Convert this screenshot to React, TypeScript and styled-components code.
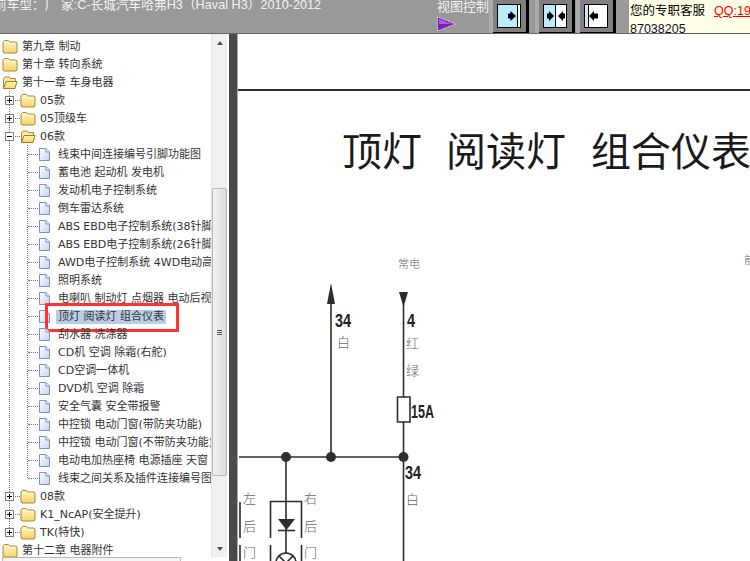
// App.tsx
import React from 'react';
import styled, { createGlobalStyle } from 'styled-components';

type TreeItem = {
  label: string;
  level: 0 | 1 | 2;
  open?: boolean;
  selected?: boolean;
  last?: boolean;
};

const items: TreeItem[] = [
  { label: '第九章 制动', level: 0 },
  { label: '第十章 转向系统', level: 0 },
  { label: '第十一章 车身电器', level: 0, open: true },
  { label: '05款', level: 1 },
  { label: '05顶级车', level: 1 },
  { label: '06款', level: 1, open: true },
  { label: '线束中间连接编号引脚功能图', level: 2 },
  { label: '蓄电池 起动机 发电机', level: 2 },
  { label: '发动机电子控制系统', level: 2 },
  { label: '倒车雷达系统', level: 2 },
  { label: 'ABS EBD电子控制系统(38针脚)', level: 2 },
  { label: 'ABS EBD电子控制系统(26针脚)', level: 2 },
  { label: 'AWD电子控制系统 4WD电动高低', level: 2 },
  { label: '照明系统', level: 2 },
  { label: '电喇叭 制动灯 点烟器 电动后视镜', level: 2 },
  { label: '顶灯 阅读灯 组合仪表', level: 2, selected: true },
  { label: '刮水器 洗涤器', level: 2 },
  { label: 'CD机 空调 除霜(右舵)', level: 2 },
  { label: 'CD空调一体机', level: 2 },
  { label: 'DVD机 空调 除霜', level: 2 },
  { label: '安全气囊 安全带报警', level: 2 },
  { label: '中控锁 电动门窗(带防夹功能)', level: 2 },
  { label: '中控锁 电动门窗(不带防夹功能)', level: 2 },
  { label: '电动电加热座椅 电源插座 天窗', level: 2 },
  { label: '线束之间关系及插件连接编号图', level: 2, last: true },
  { label: '08款', level: 1 },
  { label: 'K1_NcAP(安全提升)', level: 1 },
  { label: 'TK(特快)', level: 1, last: true },
  { label: '第十二章 电器附件', level: 0 },
];

const GlobalStyle = createGlobalStyle`
  html, body {
    margin: 0;
    padding: 0;
    height: 100%;
    overflow: hidden;
    background: #fff;
  }
  #root {
    height: 100%;
  }
`;

const Page = styled.div`
  width: 750px;
  height: 561px;
  display: flex;
  flex-direction: column;
  overflow: hidden;
  font-family: 'Liberation Sans', 'Noto Sans CJK SC', sans-serif;
`;

const Header = styled.header`
  height: 33px;
  flex: none;
  display: flex;
  background: #999;
  border-bottom: 1px solid #666;
  overflow: hidden;
`;

const CarTitle = styled.div`
  width: 437px;
  flex: none;
  margin: -4px 0 0 -6px;
  font-size: 12.7px;
  line-height: 18px;
  color: #f2f2f2;
  white-space: nowrap;
`;

const ViewControl = styled.div`
  width: 52px;
  flex: none;
  margin-left: 6px;
  display: flex;
  flex-direction: column;
  font-size: 13px;
  line-height: 14px;
  color: #f2f2f2;
  white-space: nowrap;
`;

const ToolSlot = styled.div<{ $gap: number }>`
  flex: none;
  display: flex;
  margin-left: ${({ $gap }) => $gap}px;
  border-left: 4px solid #aaa;
`;

const ToolFace = styled.button<{ $width: number }>`
  width: ${({ $width }) => $width}px;
  height: 33px;
  margin: 0;
  padding: 0 0 0 4px;
  display: flex;
  align-items: center;
  background: #808080;
  border: none;
  border-right: 3px solid #000;
  border-bottom: 1px solid #000;
  box-sizing: border-box;
`;

const Service = styled.div`
  flex: none;
  width: 121px;
  margin-left: 13px;
  padding-left: 1px;
  background: #ffffe8;
  font-size: 12.5px;
  line-height: 17px;
  color: #000;
  overflow: hidden;
  white-space: nowrap;
`;

const ServiceLine = styled.div`
  margin-top: 3px;
  height: 18px;
`;

const Phone = styled.div`
  color: #101040;
`;

const QQ = styled.a`
  margin-left: 9px;
  color: #f00;
  text-decoration: underline;
`;

const Main = styled.main`
  flex: 1;
  min-height: 0;
  display: flex;
`;

const Sidebar = styled.aside`
  width: 229px;
  flex: none;
  display: grid;
  grid-template-columns: 211px 16px;
  grid-template-rows: 523px 4px;
  background: #fff;
`;

const Tree = styled.ul`
  list-style: none;
  margin: 0;
  padding: 3px 0 0;
  overflow: hidden;
`;

const Row = styled.li`
  position: relative;
  height: 18px;
  display: flex;
  align-items: center;
  white-space: nowrap;
`;

const Guide = styled.span<{ $width: number; $line: 'none' | 'full' | 'half'; $branch?: boolean }>`
  width: ${({ $width }) => $width}px;
  height: 18px;
  flex: none;
  position: relative;
  background-image: ${({ $line }) =>
    $line === 'none'
      ? 'none'
      : 'repeating-linear-gradient(to bottom, #777 0 1px, transparent 1px 2px)'};
  background-repeat: no-repeat;
  background-position: 9px 0;
  background-size: 1px ${({ $line }) => ($line === 'half' ? '9px' : '18px')};

  &::after {
    content: '';
    display: ${({ $branch }) => ($branch ? 'block' : 'none')};
    position: absolute;
    left: 10px;
    right: 0;
    top: 9px;
    border-top: 1px dotted #777;
  }
`;

const Expander = styled.span`
  position: absolute;
  left: 5px;
  top: 5px;
  width: 7px;
  height: 7px;
  background: #fff;
  border: 1px solid #808080;
  display: flex;
  z-index: 1;
`;

const RowLabel = styled.span<{ $selected?: boolean; $level: number }>`
  margin-left: ${({ $level, $selected }) =>
    $level === 2 ? ($selected ? 5 : 7) : 4}px;
  margin-top: 2px;
  padding: 0 ${({ $selected }) => ($selected ? '2px' : '0')};
  font-family: 'DejaVu Sans', 'Noto Sans CJK SC', sans-serif;
  font-size: 11px;
  line-height: 14px;
  color: #333;
  background: ${({ $selected }) => ($selected ? '#b9cde8' : 'transparent')};
`;

const RootIndent = styled.span`
  width: 2px;
  flex: none;
`;

const RedMark = styled.span`
  position: absolute;
  left: 45px;
  top: -4px;
  width: 134px;
  height: 29px;
  box-sizing: border-box;
  border: 3px solid #f33;
  pointer-events: none;
`;

const ScrollTrack = styled.div`
  display: flex;
  flex-direction: column;
  align-items: stretch;
  background: #f0f0f0;
  border-left: 1px solid #e4e4e4;
  box-sizing: border-box;
`;

const ScrollArrow = styled.div<{ $dir: 'up' | 'down' }>`
  height: 17px;
  flex: none;
  display: flex;
  justify-content: center;
  align-items: center;
  margin-top: ${({ $dir }) => ($dir === 'down' ? 'auto' : '0')};

  &::before {
    content: '';
    border-left: 3.5px solid transparent;
    border-right: 3.5px solid transparent;
    border-bottom: ${({ $dir }) => ($dir === 'up' ? '4px solid #505050' : 'none')};
    border-top: ${({ $dir }) => ($dir === 'down' ? '4px solid #505050' : 'none')};
  }
`;

const ScrollThumb = styled.div`
  height: 288px;
  margin-top: 137px;
  flex: none;
  display: flex;
  flex-direction: column;
  justify-content: center;
  gap: 1px;
  padding: 0 4px;
  box-sizing: border-box;
  background: linear-gradient(to right, #f2f2f2, #dcdcdc);
  border: 1px solid #b8b8b8;
  border-radius: 2px;
`;

const Grip = styled.span`
  height: 1px;
  background: #555;
`;

const HScroll = styled.div`
  margin-left: 2px;
  width: 179px;
  height: 6px;
  border: 1px solid #b8b8b8;
  border-bottom: none;
  background: #f4f4f4;
  box-sizing: border-box;
`;

const Splitter = styled.div`
  width: 9px;
  flex: none;
  background: #4a4a4a;
  border-right: 1px solid #aaa;
  box-sizing: border-box;
`;

const Canvas = styled.section`
  flex: 1;
  min-width: 0;
  background: #fff;
  overflow: hidden;
`;

const DiagramSvg = styled.svg`
  display: block;
  width: 512px;
  height: 527px;
  font-family: 'Noto Sans CJK SC', 'Liberation Sans', sans-serif;
`;

const DiagramTitle = styled.text`
  font-size: 40px;
  fill: #1a1a1a;
`;

const WireLabel = styled.text<{ $small?: boolean }>`
  font-size: ${({ $small }) => ($small ? 11 : 13)}px;
  fill: #666;
  font-weight: 300;
`;

const WireNumber = styled.text`
  font-family: 'Liberation Sans', sans-serif;
  font-size: 18px;
  font-weight: 700;
  fill: #222;
`;

const Wire = styled.path`
  fill: none;
  stroke: #2c2c2c;
  stroke-width: 1.6;
`;

const Node = styled.circle`
  fill: #2f2f2f;
`;

const Solid = styled.path`
  fill: #2c2c2c;
`;

const FolderIcon = ({ open }: { open?: boolean }) => (
  <svg width="16" height="15" viewBox="0 0 16 15" style={{ flex: 'none' }}>
    <defs>
      <linearGradient id="fold" x1="0" y1="0" x2="0" y2="1">
        <stop offset="0" stopColor="#fff6c4" />
        <stop offset="1" stopColor="#f8d468" />
      </linearGradient>
    </defs>
    {open ? (
      <>
        <path d="M1.5 12.5V3.5L3 2h4l1 1.5h5.500v3" fill="#fbe9a0" stroke="#a88a3a" />
        <path d="M1.500 13.500 L4 6.500H15L13 13.500Z" fill="url(#fold)" stroke="#a07c28" />
      </>
    ) : (
      <>
        <path d="M1 4V3L2.500 1.500H6.500L8 3H14L15 4V13L14 14H2L1 13Z" fill="url(#fold)" stroke="#a88a3a" />
        <path d="M2 4.500H14" stroke="#fff8d8" />
      </>
    )}
  </svg>
);

const LeafIcon = () => (
  <svg width="13" height="15" viewBox="0 0 13 15" style={{ flex: 'none' }}>
    <defs>
      <linearGradient id="leaf" x1="0" y1="0" x2="1" y2="1">
        <stop offset="0" stopColor="#ffffff" />
        <stop offset="1" stopColor="#c4d2f2" />
      </linearGradient>
    </defs>
    <path d="M1.500 1.500H8L11.500 5V13.500H1.500Z" fill="url(#leaf)" stroke="#7d8ec4" />
    <path d="M8 1.500V5H11.500" fill="#eef2fc" stroke="#7d8ec4" />
  </svg>
);

const PurpleArrow = () => (
  <svg width="20" height="16" viewBox="0 0 20 16" style={{ marginTop: 2 }}>
    <path d="M0.500 1V15L18.500 8Z" fill="#7a1fb8" stroke="#e8d8f4" strokeDasharray="1.500 1" />
    <path d="M2 3V8H14Z" fill="#b060e0" />
  </svg>
);

const SplitIcon = ({ split, arrows }: { split: number; arrows: string }) => (
  <svg width="24" height="24" viewBox="0 0 24 24">
    <rect x="0.500" y="0.500" width="23" height="23" fill="#fff" stroke="#000" />
    <rect x="1" y="1" width={split - 1} height="22" fill="#bdeaff" />
    <path d={`M${split + 0.5} 1V23`} stroke="#000" />
    <path d={arrows} fill="#000" />
  </svg>
);

const Diagram = () => (
  <DiagramSvg viewBox="238 34 512 527">
    <Wire d="M238 90H750" style={{ strokeWidth: 2 }} />
    <DiagramTitle x="342" y="166">顶灯</DiagramTitle>
    <DiagramTitle x="446" y="166">阅读灯</DiagramTitle>
    <DiagramTitle x="591" y="166">组合仪表</DiagramTitle>

    <WireLabel $small x="398" y="268">常电</WireLabel>
    <WireLabel $small x="744" y="264">前</WireLabel>

    <Solid d="M331 283L327 304H335Z" />
    <Solid d="M399 292H408L403.500 307Z" />
    <Wire d="M331 304V457M403.500 304V397M403.500 422V561M239 457H403.500M286 457V561" />
    <Wire d="M397.500 397H410V422H397.500Z" />
    <Wire d="M270.500 538V501.500H301.500V538M270.500 545V561M301.500 545V561M240 502V538M240 545V561" />
    <Solid d="M278 519H295L286.500 530Z" />
    <Wire d="M278 530.500H295" />
    <circle cx="286" cy="563" r="10" fill="#fff" stroke="#2c2c2c" strokeWidth="1.600" />
    <Wire d="M279 556L293 570M293 556L279 570" />
    <Node cx="286" cy="457" r="5" />
    <Node cx="331" cy="457" r="5" />
    <Node cx="403.500" cy="457" r="5" />

    <WireNumber x="335" y="327" textLength={16} lengthAdjust="spacingAndGlyphs">34</WireNumber>
    <WireLabel x="337" y="347">白</WireLabel>
    <WireNumber x="407" y="327" textLength={8} lengthAdjust="spacingAndGlyphs">4</WireNumber>
    <WireLabel x="406" y="348">红</WireLabel>
    <WireLabel x="406" y="375">绿</WireLabel>
    <WireNumber x="411" y="418" textLength={23} lengthAdjust="spacingAndGlyphs">15A</WireNumber>
    <WireNumber x="405" y="479" textLength={16} lengthAdjust="spacingAndGlyphs">34</WireNumber>
    <WireLabel x="406" y="504">白</WireLabel>

    <WireLabel x="243" y="503">左</WireLabel>
    <WireLabel x="243" y="531">后</WireLabel>
    <WireLabel x="243" y="557">门</WireLabel>
    <WireLabel x="304" y="503">右</WireLabel>
    <WireLabel x="304" y="531">后</WireLabel>
    <WireLabel x="304" y="557">门</WireLabel>
  </DiagramSvg>
);

const TreeRow = ({ item }: { item: TreeItem }) => {
  if (item.level === 0) {
    return (
      <Row>
        <RootIndent />
        <FolderIcon open={item.open} />
        <RowLabel $level={0}>{item.label}</RowLabel>
      </Row>
    );
  }
  if (item.level === 1) {
    return (
      <Row>
        <Guide $width={20} $line={item.last ? 'half' : 'full'} $branch>
          <Expander>
            <svg width="7" height="7" viewBox="0 0 7 7">
              <path d={item.open ? 'M1 3.500H6' : 'M1 3.500H6M3.500 1V6'} stroke="#000" />
            </svg>
          </Expander>
        </Guide>
        <FolderIcon open={item.open} />
        <RowLabel $level={1}>{item.label}</RowLabel>
      </Row>
    );
  }
  return (
    <Row>
      <Guide $width={18} $line="full" />
      <Guide $width={20} $line={item.last ? 'half' : 'full'} $branch />
      <LeafIcon />
      <RowLabel $level={2} $selected={item.selected}>{item.label}</RowLabel>
      {item.selected && <RedMark />}
    </Row>
  );
};

const App: React.FC = () => {
  return (
    <>
      <GlobalStyle />
      <Page>
        <Header>
          <CarTitle>前车型：厂 家:C-长城汽车哈弗H3（Haval H3）2010-2012</CarTitle>
          <ViewControl>
            视图控制
            <PurpleArrow />
          </ViewControl>
          <ToolSlot $gap={0}>
            <ToolFace $width={36}>
              <SplitIcon split={20} arrows="M11 9.500V14.500H13.500V17L19 12L13.500 7V9.500Z" />
            </ToolFace>
          </ToolSlot>
          <ToolSlot $gap={6}>
            <ToolFace $width={36}>
              <SplitIcon
                split={12}
                arrows="M4 9.500V14.500H6V17L11 12L6 7V9.500ZM22 9.500V14.500H20V17L15 12L20 7V9.500Z"
              />
            </ToolFace>
          </ToolSlot>
          <ToolSlot $gap={1}>
            <ToolFace $width={36}>
              <SplitIcon split={4} arrows="M14 9.500V14.500H10V17L5 12L10 7V9.500Z" />
            </ToolFace>
          </ToolSlot>
          <Service>
            <ServiceLine>
              您的专职客服<QQ>QQ:19</QQ>
            </ServiceLine>
            <Phone>87038205</Phone>
          </Service>
        </Header>
        <Main>
          <Sidebar>
            <Tree>
              {items.map(item => (
                <TreeRow key={item.label} item={item} />
              ))}
            </Tree>
            <ScrollTrack>
              <ScrollArrow $dir="up" />
              <ScrollThumb>
                <Grip />
                <Grip />
                <Grip />
              </ScrollThumb>
              <ScrollArrow $dir="down" />
            </ScrollTrack>
            <HScroll />
          </Sidebar>
          <Splitter />
          <Canvas>
            <Diagram />
          </Canvas>
        </Main>
      </Page>
    </>
  );
};

export default App;
